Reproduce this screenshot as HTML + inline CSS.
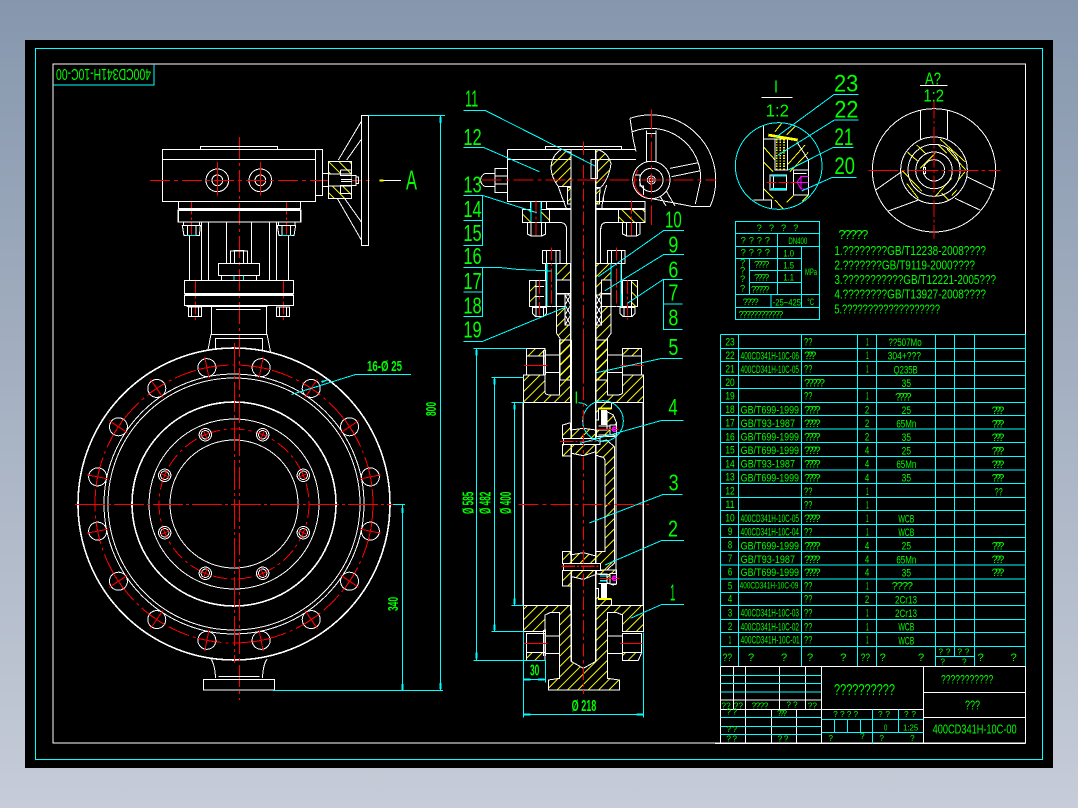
<!DOCTYPE html>
<html><head><meta charset="utf-8"><title>400CD341H-10C-00</title>
<style>
html,body{margin:0;padding:0;width:1078px;height:808px;overflow:hidden;background:#9aa8bc}
svg{display:block;position:absolute;left:0;top:0}
.w{stroke:#fff;fill:none}.wb{stroke:#fff;fill:#000}.c{stroke:#0ff;fill:none}.r{stroke:#f00;fill:none}.y{stroke:#ff0;fill:none}.m{stroke:#f0f;fill:none}
.h{stroke:#fff;fill:url(#h)}.b{stroke:#fff;fill:url(#b)}
text{fill:#0f0;font-family:"Liberation Sans",sans-serif;stroke:none}
.mid{text-anchor:middle}
.bd{font-weight:bold}
</style></head><body>
<svg width="1078" height="808" viewBox="0 0 1078 808" xmlns="http://www.w3.org/2000/svg" shape-rendering="crispEdges">
<defs>
<linearGradient id="bg" x1="0" y1="0" x2="0" y2="1"><stop offset="0" stop-color="#8697ad"/><stop offset="1" stop-color="#c6ccd8"/></linearGradient>
<pattern id="h" width="22" height="22" patternUnits="userSpaceOnUse" patternTransform="rotate(45)"><line x1="1" y1="0" x2="1" y2="22" stroke="#ff0" stroke-width="2.4"/></pattern>
<pattern id="b" width="22" height="22" patternUnits="userSpaceOnUse" patternTransform="rotate(-45)"><line x1="1" y1="0" x2="1" y2="22" stroke="#ff0" stroke-width="2.4"/></pattern>
<g id="bh"><circle cx="234" cy="365" r="9" class="w"/><path class="r" d="M234 354V376M225 365H243"/></g>
<g id="sh"><circle cx="234" cy="429" r="6.2" class="w"/><circle cx="234" cy="429" r="4.2" class="w"/><path class="r" d="M234 424V434M229 429H239"/></g>
<clipPath id="ci"><circle cx="161" cy="303" r="130"/></clipPath>
</defs>
<rect width="1078" height="808" fill="url(#bg)"/>
<rect x="25" y="40" width="1028" height="728" fill="#000"/>
<rect x="35.5" y="48.5" width="1007" height="711" class="c"/>
<rect x="53" y="64" width="972.5" height="679" class="w"/>
<path class="c" d="M53 85H154V64"/>
<text transform="rotate(180 103.5 75)" x="56" y="81" font-size="16" textLength="95" lengthAdjust="spacingAndGlyphs">400CD341H-10C-00</text>

<!-- main circular view -->
<g stroke-width="1">
<circle cx="234" cy="504" r="156" class="w" stroke-width="1.6"/>
<circle cx="234" cy="504" r="130" class="w"/><circle cx="234" cy="504" r="126" class="w"/>
<circle cx="234" cy="504" r="102" class="w" stroke-width="1.6"/>
<circle cx="234" cy="504" r="85" class="w"/><circle cx="234" cy="504" r="64" class="w"/>
<circle cx="234" cy="504" r="139" class="r" stroke-dasharray="22 4 3 4"/>
<circle cx="234" cy="504" r="75" class="r" stroke-dasharray="14 4 3 4"/>
<use href="#bh" transform="rotate(11.25 234 504)"/><use href="#bh" transform="rotate(33.75 234 504)"/><use href="#bh" transform="rotate(56.25 234 504)"/><use href="#bh" transform="rotate(78.75 234 504)"/>
<use href="#bh" transform="rotate(101.25 234 504)"/><use href="#bh" transform="rotate(123.75 234 504)"/><use href="#bh" transform="rotate(146.25 234 504)"/><use href="#bh" transform="rotate(168.75 234 504)"/>
<use href="#bh" transform="rotate(191.25 234 504)"/><use href="#bh" transform="rotate(213.75 234 504)"/><use href="#bh" transform="rotate(236.25 234 504)"/><use href="#bh" transform="rotate(258.75 234 504)"/>
<use href="#bh" transform="rotate(281.25 234 504)"/><use href="#bh" transform="rotate(303.75 234 504)"/><use href="#bh" transform="rotate(326.25 234 504)"/><use href="#bh" transform="rotate(348.75 234 504)"/>
<use href="#sh" transform="rotate(22.5 234 504)"/><use href="#sh" transform="rotate(67.5 234 504)"/><use href="#sh" transform="rotate(112.5 234 504)"/><use href="#sh" transform="rotate(157.5 234 504)"/>
<use href="#sh" transform="rotate(202.5 234 504)"/><use href="#sh" transform="rotate(247.5 234 504)"/><use href="#sh" transform="rotate(292.5 234 504)"/><use href="#sh" transform="rotate(337.5 234 504)"/>
<path class="r" d="M75 504.5H393" stroke-dasharray="30 3 3 3"/>
<path class="r" d="M234.5 343V663" stroke-dasharray="30 3 3 3"/>
<path class="r" d="M239.5 137V700" stroke-dasharray="22 4 3 4"/>
<!-- neck top -->
<path class="w" d="M211.5 306V334M266.5 306V334M211 334.5H267M211 334L208 350M267 334L270.5 352M215.5 350V338.5H262.5V350"/>
<!-- foot -->
<path class="w" d="M211 659Q215 665 215.5 678M267 659Q263 665 262.5 678M218.5 676.5H259.5"/>
<rect x="203.5" y="679.5" width="71" height="10.5" class="w" stroke-width="1.4"/>
<!-- dims -->
<path class="c" d="M273 690.5H443M440.5 115.5V690M393 504.5H405M402.5 504.5V690M369 115.5H445M411 374.5H355.5L291.5 394.5"/>
<path d="M401.5 508h2v5h-2zM401.5 684h2v6h-2zM439.5 683h2v6h-2zM439.5 117h2v6h-2zM330 379l-8 4-1-2z" fill="#0ff"/>
<text class="bd" transform="translate(436 416) rotate(-90)" font-size="15" textLength="14" lengthAdjust="spacingAndGlyphs">800</text>
<text class="bd" transform="translate(398 611) rotate(-90)" font-size="15" textLength="14" lengthAdjust="spacingAndGlyphs">340</text>
<text class="bd" x="367" y="371" font-size="15" textLength="35" lengthAdjust="spacingAndGlyphs">16-Ø 25</text>
</g>

<!-- gear operator, zoom-1 coords -->
<g transform="translate(40 50) scale(.33333)" stroke-width="3">
<rect x="367" y="298" width="459" height="156" class="w"/><path class="w" d="M367 328H826M482 298V290H713V298M826 298H848V437H826"/>
<circle cx="532" cy="391" r="34" class="w"/><circle cx="532" cy="391" r="16" class="w"/>
<circle cx="661" cy="391" r="34" class="w"/><circle cx="661" cy="391" r="16" class="w"/>
<path class="r" d="M532 336V436M661 336V436"/>
<path class="r" d="M330 391H995" stroke-dasharray="60 12 12 12"/>
<path class="r" d="M454 454V565M740 454V565M466 690V810M730 690V810" stroke-dasharray="40 8 8 8"/>
<rect x="415" y="454" width="367" height="21" class="w"/><rect x="415" y="481" width="367" height="35" class="w" stroke-width="4"/><path class="w" d="M415 477.5H782" stroke-width="5"/>
<path class="w" d="M430 518V527H478V518M715 518V527H765V518"/>
<path class="w" d="M427 527H481L478 557H432ZM442 527V557H468V527M712 527H767L762 557H717ZM726 527V557H752V527"/>
<path class="c" d="M440 556h30M725 556h30"/>
<path class="w" d="M448 557V690M484 518V690M506 518V690M559 518V640M634 518V640M688 518V690M709 518V690M746 557V690"/>
<rect x="535" y="640" width="124" height="37" class="w"/><rect x="571" y="603" width="52" height="37" class="w"/><path class="w" d="M583 603V640M611 603V640M580 601H614M544 677V690M649 677V690"/>
<path class="c" d="M582 677V690M611 677V690"/>
<rect x="433" y="692" width="328" height="38" class="w"/><rect x="433" y="736" width="328" height="30" class="w"/><path class="w" d="M433 733H761" stroke-width="4"/>
<path class="w" d="M445 771H485V800H445ZM455 771V800M475 771V800M709 771H749V800H709ZM719 771V800M739 771V800M440 769H682"/>
<path class="w" d="M528 778H662"/>
<rect x="865" y="334" width="70" height="112" class="h" style="fill:url(#b)"/>
<rect x="865" y="372" width="70" height="36" fill="#000"/>
<path class="w" d="M865 372H935M865 408H935M848 370V410H865V370ZM901 360V376H948V407H901V430M901 360H935M901 430H935M948 381H956V400H948M903 388H935M903 395H935"/>
<rect x="964" y="196" width="22" height="391" class="w"/>
<path class="w" d="M895 330L964 214M920 330L964 268M893 447L964 570M915 447L964 516"/>
<path d="M1018 389H1030V394H1018Z" fill="#ff0"/><path class="w" d="M1030 391.5H1083"/>
<path class="c" d="M986 197H1200"/>
<text x="1098" y="418" font-size="84" textLength="33" lengthAdjust="spacingAndGlyphs">A</text>
</g>

<!-- section upper, zoom-3 coords -->
<g transform="translate(450 80) scale(.33333)" stroke-width="3">
<!-- gear wheel -->
<path class="w" d="M540 115A195 195 0 0 1 780 380H730L600 355M540 115L550 180L558 215M555 285L580 345"/>
<path class="w" d="M548 155A150 150 0 0 1 752 300L736 372M590 152V245M618 152V245M590 160H618M660 265L745 248M665 290L752 272M650 335L675 378M628 345L648 378"/>
<circle cx="604" cy="300" r="56" class="wb"/><circle cx="604" cy="300" r="35" class="w"/><circle cx="604" cy="300" r="12" class="w"/><circle cx="604" cy="300" r="6" class="w"/>
<path class="r" d="M565 270A52 52 0 0 0 590 352"/>
<path class="w" d="M555 285H570V318H580V345"/>
<!-- case -->
<path class="w" d="M172 208H555M286 208V200H515V208M172 208V365H345M172 238H363M438 238H558M438 365H585V385H438M290 365V385H363M242 365V385M274 365V385M460 352V365"/>
<path class="w" d="M92 300A18 20 0 0 1 110 280H135V320H110A18 20 0 0 1 92 300ZM135 265H172V338H135ZM135 288H172M135 312H172"/>
<!-- bulges -->
<path class="h" d="M335 208L363 218V320H325Q303 290 303 262Q305 225 335 208Z"/>
<path class="h" d="M437 208Q470 212 483 250Q478 292 455 320L438 328Z"/>
<path class="w" d="M325 320Q335 350 350 388M470 315Q458 350 455 388"/>
<path class="h" d="M352 322H363V372H352ZM437 322H450L448 372H437Z"/>
<path class="wb" d="M423 238H443V295H423Z"/>
<!-- flanges -->
<path class="h" d="M218 388H298V428H218Z" style="fill:url(#b)"/>
<path class="h" d="M505 388H585V428H505Z" style="fill:url(#b)"/>
<path class="wb" d="M243 365H273V428H243Z"/><path class="c" d="M243 365V428M273 365V428"/>
<path class="w" d="M298 388H363M438 388H505M298 428H335Q350 430 350 450V550M505 428H465Q452 430 452 450V550"/>
<path class="w" d="M232 428H287V462L275 468H243L232 462ZM243 428V468M275 428V468M518 428H570V462L560 468H530L518 462ZM530 428V468M560 428V468"/>
<!-- body column -->
<path class="h" d="M320 550H362V900H330V775L320 760ZM438 550H483V760L472 775V900H438Z"/>
<path class="wb" d="M345 645H362V735H345ZM438 645H455V735H438Z"/>
<path class="w" d="M345 645L362 675M362 645L345 675M345 675L362 705M362 675L345 705M345 705L362 735M362 705L345 735M438 645L455 675M455 645L438 675M438 675L455 705M455 675L438 705M438 705L455 735M455 705L438 735"/>
<!-- bolts -->
<path class="wb" d="M277 512H330V550H277ZM289 512V550M318 512V550"/>
<path class="wb" d="M287 550H320V680H287Z"/><path class="c" d="M290 550V680M318 550V680" stroke-width="4"/>
<path class="wb" d="M320 600H362V640H320ZM320 642H345V680H320Z"/>
<path class="wb" d="M472 512H525V550H472ZM484 512V550M514 512V550"/>
<path class="wb" d="M483 550H515V680H483Z"/><path class="c" d="M483 550V680M513 550V680" stroke-width="4"/>
<path class="wb" d="M455 600H483V640H455ZM455 642H483V680H455Z"/>
<path class="h" d="M238 602H258V680H238Z"/><path class="wb" d="M258 602H288V680H258ZM247 682H290V700L280 710H257L247 700Z"/><path class="w" d="M258 682V710M280 682V710M255 620H282M255 650H282"/>
<path class="h" d="M542 602H562V680H542Z" style="fill:url(#b)"/><path class="wb" d="M518 602H545V680H518ZM510 682H555V700L545 710H520L510 700Z"/><path class="w" d="M522 682V710M545 682V710"/>
<path class="c" d="M515 640V680"/>
<!-- stem -->
<path class="w" d="M363 208V900M437 208V900" stroke-width="4"/>
<!-- red -->
<path class="r" d="M95 300H800" stroke-dasharray="60 12 12 12"/>
<path class="r" d="M604 88V435" stroke-dasharray="60 12 12 12"/>
<path class="r" d="M400 185V900" stroke-dasharray="40 10 10 10"/>
<path class="r" d="M258 362V470M544 362V470M304 502V680M500 502V680M268 602V712M532 602V718" stroke-dasharray="40 8 8 8"/>
<!-- leaders -->
<path class="c" d="M40 91H105L435 258M40 202H100L268 275M40 347H100L260 398M40 347H97V497H40M40 422H97M40 562H145L200 568L305 573M40 562H97V710H40M40 636H97M40 784H98L350 680"/>
<path class="c" d="M702 451H642L445 590M702 523H642L465 632M698 598H640L532 670M640 598V748H698M640 672H698M698 835H636L440 878"/>
<g font-size="70">
<text x="45" y="80" textLength="40" lengthAdjust="spacingAndGlyphs">11</text>
<text x="40" y="195" textLength="55" lengthAdjust="spacingAndGlyphs">12</text>
<text x="40" y="338" textLength="55" lengthAdjust="spacingAndGlyphs">13</text>
<text x="40" y="411" textLength="55" lengthAdjust="spacingAndGlyphs">14</text>
<text x="40" y="483" textLength="55" lengthAdjust="spacingAndGlyphs">15</text>
<text x="40" y="552" textLength="55" lengthAdjust="spacingAndGlyphs">16</text>
<text x="40" y="627" textLength="55" lengthAdjust="spacingAndGlyphs">17</text>
<text x="40" y="700" textLength="55" lengthAdjust="spacingAndGlyphs">18</text>
<text x="40" y="772" textLength="55" lengthAdjust="spacingAndGlyphs">19</text>
<text x="645" y="443" textLength="50" lengthAdjust="spacingAndGlyphs">10</text>
<text x="655" y="517" textLength="30" lengthAdjust="spacingAndGlyphs">9</text>
<text x="655" y="592" textLength="30" lengthAdjust="spacingAndGlyphs">6</text>
<text x="655" y="662" textLength="30" lengthAdjust="spacingAndGlyphs">7</text>
<text x="655" y="737" textLength="30" lengthAdjust="spacingAndGlyphs">8</text>
<text x="655" y="825" textLength="30" lengthAdjust="spacingAndGlyphs">5</text>
</g>
</g>

<!-- section lower, zoom-4 coords -->
<g transform="translate(450 340) scale(.33333)" stroke-width="3">
<path class="h" d="M220 105H285V158Q288 165 300 165H328V0H362V187H220Z"/>
<path class="h" d="M580 105H518V158Q515 165 500 165H472V0H438V187H580Z"/>
<rect x="229" y="25" width="56" height="23" class="h"/><rect x="518" y="25" width="57" height="23" class="h"/>
<rect x="229" y="48" width="56" height="57" class="w"/><rect x="518" y="48" width="57" height="57" class="w"/>
<path class="w" d="M280 30V105M286 30V105M285 45H328M285 97H328M472 45H518M472 97H518M518 30V105"/>
<path class="h" d="M220 797H362L365 965L400 985L436 965L438 797H580V875H518V825L500 818H472V1015L508 1020V1050H296V1020L328 1015V818H300L285 825V875H220Z"/>
<path class="h" d="M229 938H285V961H229ZM518 938H575L565 961H518Z"/>
<rect x="229" y="880" width="56" height="58" class="w"/><rect x="518" y="880" width="57" height="58" class="w"/>
<path class="w" d="M280 870V948M286 868V948M285 888H328M285 940H328M472 888H518M472 940H518"/>
<path class="w" d="M220 187V797M580 187V797" stroke-width="5"/>
<path class="w" d="M220 187H362M438 187H580M220 797H362M438 797H580"/>
<path class="w" d="M364 0V965M437 0V965" stroke-width="4"/>
<!-- right disc -->
<path class="h" d="M438 313L450 305L470 300L493 320V670L470 690L438 692V635H465V365Q465 350 450 350L438 345Z"/>
<path class="w" d="M498 285V700M493 285H500"/>
<!-- upper seat -->
<path class="h" d="M438 187H485V205H445V240H438Z"/>
<path class="h" d="M471 215L490 225L500 250V290H440V270H471Z"/>
<rect x="453" y="210" width="18" height="45" fill="#fff"/>
<path class="y" d="M445 205H485" stroke-width="6"/>
<rect x="480" y="255" width="20" height="30" class="wb"/>
<path class="w" d="M445 258H480M445 285H480"/>
<path class="r" d="M440 268H505"/>
<path class="m" d="M500 262H490Q484 268 490 274H500M486 268H498" stroke-width="4"/>
<!-- lower seat -->
<path class="h" d="M438 797H485V778H445V745H438Z"/>
<path class="h" d="M471 728L490 735L500 732V690H440V702H471Z"/>
<rect x="453" y="730" width="18" height="45" fill="#fff"/>
<path class="y" d="M445 777H485" stroke-width="6"/>
<rect x="480" y="700" width="20" height="32" class="wb"/>
<path class="w" d="M445 704H480M445 730H480"/>
<path class="r" d="M450 715H508"/>
<path class="m" d="M500 709H490Q484 715 490 721H500M486 715H498" stroke-width="4"/>
<path class="c" d="M450 708H470M450 722H470" stroke-width="4"/>
<!-- left bosses -->
<path class="h" d="M338 255L362 248V270L400 265L438 270V295H338Z"/>
<path class="h" d="M338 313H438V335L400 347L365 340V348H338Z"/>
<path class="h" d="M338 635H362V645L400 638L438 648V670H338Z"/>
<path class="h" d="M338 692H438V703L400 718L365 710V738H338Z"/>
<rect x="340" y="295" width="110" height="18" class="wb"/>
<rect x="340" y="670" width="112" height="22" class="wb"/>
<path class="r" d="M330 304H450" stroke-dasharray="40 6 6 6"/>
<path class="r" d="M335 679H450" stroke-width="5" stroke-dasharray="40 6 6 6"/>
<path class="c" d="M385 188Q400 188 411 197"/>
<circle cx="459" cy="243" r="61" class="c"/>
<text x="373" y="190" font-size="52" textLength="12" lengthAdjust="spacingAndGlyphs">I</text>
<!-- red -->
<path class="r" d="M205 493H597" stroke-dasharray="60 12 12 12"/>
<path class="r" d="M400 0V1062" stroke-dasharray="40 10 10 10"/>
<path class="r" d="M222 76H292M510 76H582M222 910H292M510 910H582"/>
<!-- dims -->
<path class="c" d="M80 25V961M70 25H229M70 961H285M133 112V875M125 112H220M125 874H220M193 187V797M185 187H220M185 796H220M220 875V1133M286 960V1028M220 1018H286M580 878V1133M220 1123H580"/>
<path fill="#0ff" d="M77 30h6v17h-6zM77 938h6v17h-6zM130 117h6v16h-6zM130 853h6v17h-6zM190 195h6v14h-6zM190 776h6v16h-6zM220 1015h22v6h-22zM264 1015h20v6h-20zM222 1120h20v6h-20zM560 1120h20v6h-20z"/>
<path class="c" d="M700 241H636L390 310M698 463H640L418 549M702 601H636L465 675M702 793H636L541 835M698 55H636L440 98"/>
<g font-size="48" class="bd">
<text transform="translate(70 522) rotate(-90)" textLength="67" lengthAdjust="spacingAndGlyphs">Ø 585</text>
<text transform="translate(122 522) rotate(-90)" textLength="67" lengthAdjust="spacingAndGlyphs">Ø 482</text>
<text transform="translate(183 522) rotate(-90)" textLength="67" lengthAdjust="spacingAndGlyphs">Ø 400</text>
<text x="240" y="1007" textLength="28" lengthAdjust="spacingAndGlyphs">30</text>
<text x="365" y="1113" textLength="74" lengthAdjust="spacingAndGlyphs">Ø 218</text>
</g>
<g font-size="70">
<text x="655" y="225" textLength="28" lengthAdjust="spacingAndGlyphs">4</text>
<text x="656" y="452" textLength="30" lengthAdjust="spacingAndGlyphs">3</text>
<text x="654" y="590" textLength="30" lengthAdjust="spacingAndGlyphs">2</text>
<text x="660" y="782" textLength="16" lengthAdjust="spacingAndGlyphs">1</text>
</g>
</g>

<!-- details, zoom-5 coords -->
<g transform="translate(725 65) scale(.33333)" stroke-width="3">
<g clip-path="url(#ci)">
<path class="y" d="M150 200L170 175M185 210L215 180M115 245L150 285M115 290L145 320M187 300L240 240M195 320L250 262M115 370L145 400M150 405L175 432M185 412L205 392M232 408L248 392"/>
<path class="wb" d="M150 222H187V315H150Z"/>
<path stroke="#ff0" stroke-width="5" stroke-dasharray="4 4" fill="none" d="M155 222V315M166 222V315M177 222V315"/>
<path stroke="#ff0" stroke-width="8" fill="none" d="M130 210L218 225"/>
<path class="w" d="M115 170V222M115 222H150M115 222V405M205 315H250V390H205ZM205 325H245M250 285V315M215 230L250 285M135 330H185V375H135ZM145 330V375M85 405H140V433M140 405V433"/>
<path class="c" d="M138 332H185M138 372H185" stroke-width="5"/>
<path class="r" d="M125 352H240" stroke-dasharray="30 6"/>
<path class="m" d="M250 334H228L216 352L228 372H250M228 334V372M216 352H250" stroke-width="3"/>
<path class="r" d="M32 285V320"/>
</g>
<circle cx="161" cy="303" r="130" class="c"/>
<path class="w" d="M110 97H203M585 61H668"/>
<path class="c" d="M400 88H328L155 215M400 165H328L160 270M385 247H325L190 315M395 337H322L230 378"/>
<g font-size="72">
<text x="327" y="80" textLength="73" lengthAdjust="spacingAndGlyphs">23</text>
<text x="328" y="158" textLength="72" lengthAdjust="spacingAndGlyphs">22</text>
<text x="328" y="240" textLength="57" lengthAdjust="spacingAndGlyphs">21</text>
<text x="328" y="327" textLength="62" lengthAdjust="spacingAndGlyphs">20</text>
</g>
<g font-size="52">
<text x="147" y="82" textLength="12" lengthAdjust="spacingAndGlyphs">I</text>
<text x="122" y="155" textLength="70" lengthAdjust="spacingAndGlyphs">1:2</text>
<text x="600" y="58" textLength="48" lengthAdjust="spacingAndGlyphs">A?</text>
<text x="595" y="110" textLength="62" lengthAdjust="spacingAndGlyphs">1:2</text>
</g>
<!-- A view -->
<circle cx="627" cy="316" r="185" class="w"/>
<path class="w" d="M587 137V220Q585 222 588 225M667 137V222"/>
<path class="y" d="M575 240L605 268M548 262L580 290M530 315L590 378M545 355L580 400M645 222L720 290M665 250L722 315M630 265L585 310M680 340L630 395M650 385L670 405M695 375L680 392M640 240L665 265M720 320L700 345"/>
<circle cx="627" cy="316" r="100" class="w"/><circle cx="627" cy="316" r="78" class="w"/><circle cx="627" cy="316" r="55" class="w"/><circle cx="627" cy="316" r="32" class="w"/>
<path class="w" d="M452 375L530 320M490 438L580 405M765 435L690 400M808 375L725 335M595 308H602V325H595Z"/>
<path class="r" d="M430 316H827" stroke-dasharray="90 10 10 10"/>
<path class="r" d="M627 110V520" stroke-dasharray="50 8 8 8"/>
<!-- params table -->
<rect x="32" y="470" width="251" height="293" class="c"/>
<path class="c" d="M32 506H283M32 545H283M32 580H230M73 616H230M73 652H230M32 688H283M32 727H283M158 506V688M73 580V688M230 545V727M138 688V727"/>
<g font-size="28">
<text x="95" y="498" textLength="125" lengthAdjust="spacing">? ? ? ?</text>
<text x="47" y="535" textLength="88" lengthAdjust="spacing">? ? ? ?</text>
<text x="190" y="537" textLength="57" lengthAdjust="spacingAndGlyphs">DN400</text>
<text x="47" y="572" textLength="88" lengthAdjust="spacing">? ? ? ?</text>
<text x="175" y="575" textLength="32" lengthAdjust="spacingAndGlyphs">1.0</text>
<text x="45" y="601">?</text><text x="45" y="625">?</text><text x="45" y="651">?</text><text x="45" y="679">?</text>
<text x="87" y="608" textLength="46" lengthAdjust="spacing">????</text>
<text x="175" y="611" textLength="32" lengthAdjust="spacingAndGlyphs">1.5</text>
<text x="87" y="646" textLength="46" lengthAdjust="spacing">????</text>
<text x="175" y="646" textLength="32" lengthAdjust="spacingAndGlyphs">1.1</text>
<text x="78" y="682" textLength="56" lengthAdjust="spacing">?????</text>
<text x="240" y="630" textLength="36" lengthAdjust="spacingAndGlyphs">MPa</text>
<text x="53" y="720" textLength="48" lengthAdjust="spacing">????</text>
<text x="143" y="722" textLength="85" lengthAdjust="spacingAndGlyphs">-25~425</text>
<text x="247" y="720" textLength="20" lengthAdjust="spacingAndGlyphs">°C</text>
<text x="40" y="757" textLength="135" lengthAdjust="spacing">????????????</text>
</g>
<g font-size="38">
<text x="340" y="522" textLength="90" lengthAdjust="spacing">?????</text>
<text x="328" y="570" textLength="455" lengthAdjust="spacingAndGlyphs">1.????????GB/T12238-2008????</text>
<text x="328" y="613" textLength="422" lengthAdjust="spacingAndGlyphs">2.???????GB/T9119-2000????</text>
<text x="328" y="657" textLength="485" lengthAdjust="spacingAndGlyphs">3.???????????GB/T12221-2005???</text>
<text x="328" y="700" textLength="455" lengthAdjust="spacingAndGlyphs">4.????????GB/T13927-2008????</text>
<text x="328" y="745" textLength="317" lengthAdjust="spacingAndGlyphs">5.???????????????????</text>
</g>
</g>

<!-- parts table, zoom-6 coords -->
<g transform="translate(715 330) scale(.33333)" stroke-width="3">
<path class="c" d="M17 14H931M17 55H931M17 95H931M17 136H931M17 176H931M17 217H931M17 257H931M17 297H931M17 338H931M17 380H931M17 420H931M17 460H931M17 502H931M17 542H931M17 583H931M17 622H931M17 665H931M17 705H931M17 747H931M17 787H931M17 827H931M17 868H931M17 908H931M17 949H931"/>
<path class="c" d="M17 14V1009M71 14V1009M260 14V1009M428 14V1009M485 14V1009M661 14V949M718 14V979M779 14V1009M931 14V1009M661 949V1009M661 979H779"/>
<g font-size="33">
<text class="mid" x="45" y="46" textLength="28" lengthAdjust="spacingAndGlyphs">23</text><text x="267" y="46" textLength="25" lengthAdjust="spacingAndGlyphs">??</text><text class="mid" x="457" y="46" textLength="8" lengthAdjust="spacingAndGlyphs">1</text><text class="mid" x="570" y="48" textLength="100" lengthAdjust="spacingAndGlyphs">??507Mo</text>
<text class="mid" x="45" y="87" textLength="28" lengthAdjust="spacingAndGlyphs">22</text><text x="77" y="89" textLength="175" lengthAdjust="spacingAndGlyphs">400CD341H-10C-06</text><text x="267" y="87" textLength="37" lengthAdjust="spacing">???</text><text class="mid" x="457" y="87" textLength="8" lengthAdjust="spacingAndGlyphs">1</text><text class="mid" x="568" y="89" textLength="100" lengthAdjust="spacingAndGlyphs">304+???</text>
<text class="mid" x="45" y="127" textLength="28" lengthAdjust="spacingAndGlyphs">21</text><text x="77" y="129" textLength="175" lengthAdjust="spacingAndGlyphs">400CD341H-10C-05</text><text x="267" y="127" textLength="25" lengthAdjust="spacingAndGlyphs">??</text><text class="mid" x="457" y="127" textLength="8" lengthAdjust="spacingAndGlyphs">1</text><text class="mid" x="572" y="130" textLength="72" lengthAdjust="spacingAndGlyphs">Q235B</text>
<text class="mid" x="45" y="168" textLength="28" lengthAdjust="spacingAndGlyphs">20</text><text x="267" y="170" textLength="63" lengthAdjust="spacing">?????</text><text class="mid" x="574" y="171" textLength="28" lengthAdjust="spacingAndGlyphs">35</text>
<text class="mid" x="45" y="209" textLength="28" lengthAdjust="spacingAndGlyphs">19</text><text x="267" y="209" textLength="25" lengthAdjust="spacingAndGlyphs">??</text><text class="mid" x="457" y="209" textLength="8" lengthAdjust="spacingAndGlyphs">1</text><text class="mid" x="565" y="211" textLength="50" lengthAdjust="spacing">????</text>
<text class="mid" x="45" y="249" textLength="28" lengthAdjust="spacingAndGlyphs">18</text><text x="77" y="250" textLength="175" lengthAdjust="spacingAndGlyphs">GB/T699-1999</text><text x="267" y="250" textLength="50" lengthAdjust="spacing">????</text><text class="mid" x="456" y="250" textLength="13" lengthAdjust="spacingAndGlyphs">2</text><text class="mid" x="574" y="252" textLength="28" lengthAdjust="spacingAndGlyphs">25</text><text class="mid" x="849" y="252" textLength="38" lengthAdjust="spacing">???</text>
<text class="mid" x="45" y="290" textLength="28" lengthAdjust="spacingAndGlyphs">17</text><text x="77" y="291" textLength="163" lengthAdjust="spacingAndGlyphs">GB/T93-1987</text><text x="267" y="291" textLength="50" lengthAdjust="spacing">????</text><text class="mid" x="456" y="291" textLength="13" lengthAdjust="spacingAndGlyphs">2</text><text class="mid" x="574" y="293" textLength="60" lengthAdjust="spacingAndGlyphs">65Mn</text><text class="mid" x="849" y="293" textLength="38" lengthAdjust="spacing">???</text>
<text class="mid" x="45" y="331" textLength="28" lengthAdjust="spacingAndGlyphs">16</text><text x="77" y="332" textLength="175" lengthAdjust="spacingAndGlyphs">GB/T699-1999</text><text x="267" y="332" textLength="50" lengthAdjust="spacing">????</text><text class="mid" x="456" y="332" textLength="13" lengthAdjust="spacingAndGlyphs">2</text><text class="mid" x="574" y="333" textLength="28" lengthAdjust="spacingAndGlyphs">35</text><text class="mid" x="849" y="333" textLength="38" lengthAdjust="spacing">???</text>
<text class="mid" x="45" y="371" textLength="28" lengthAdjust="spacingAndGlyphs">15</text><text x="77" y="372" textLength="175" lengthAdjust="spacingAndGlyphs">GB/T699-1999</text><text x="267" y="372" textLength="50" lengthAdjust="spacing">????</text><text class="mid" x="456" y="372" textLength="13" lengthAdjust="spacingAndGlyphs">4</text><text class="mid" x="574" y="373" textLength="28" lengthAdjust="spacingAndGlyphs">25</text><text class="mid" x="849" y="373" textLength="38" lengthAdjust="spacing">???</text>
<text class="mid" x="45" y="412" textLength="28" lengthAdjust="spacingAndGlyphs">14</text><text x="77" y="413" textLength="163" lengthAdjust="spacingAndGlyphs">GB/T93-1987</text><text x="267" y="413" textLength="50" lengthAdjust="spacing">????</text><text class="mid" x="456" y="413" textLength="13" lengthAdjust="spacingAndGlyphs">4</text><text class="mid" x="574" y="414" textLength="60" lengthAdjust="spacingAndGlyphs">65Mn</text><text class="mid" x="849" y="414" textLength="38" lengthAdjust="spacing">???</text>
<text class="mid" x="45" y="452" textLength="28" lengthAdjust="spacingAndGlyphs">13</text><text x="77" y="454" textLength="175" lengthAdjust="spacingAndGlyphs">GB/T699-1999</text><text x="267" y="454" textLength="50" lengthAdjust="spacing">????</text><text class="mid" x="456" y="454" textLength="13" lengthAdjust="spacingAndGlyphs">4</text><text class="mid" x="574" y="455" textLength="28" lengthAdjust="spacingAndGlyphs">35</text><text class="mid" x="849" y="455" textLength="38" lengthAdjust="spacing">???</text>
<text class="mid" x="45" y="493" textLength="28" lengthAdjust="spacingAndGlyphs">12</text><text x="267" y="495" textLength="25" lengthAdjust="spacingAndGlyphs">??</text><text class="mid" x="457" y="495" textLength="8" lengthAdjust="spacingAndGlyphs">1</text><text class="mid" x="851" y="496" textLength="24" lengthAdjust="spacingAndGlyphs">??</text>
<text class="mid" x="45" y="534" textLength="28" lengthAdjust="spacingAndGlyphs">11</text><text x="267" y="535" textLength="25" lengthAdjust="spacingAndGlyphs">??</text><text class="mid" x="457" y="535" textLength="8" lengthAdjust="spacingAndGlyphs">1</text>
<text class="mid" x="45" y="574" textLength="28" lengthAdjust="spacingAndGlyphs">10</text><text x="77" y="576" textLength="175" lengthAdjust="spacingAndGlyphs">400CD341H-10C-05</text><text x="267" y="576" textLength="50" lengthAdjust="spacing">????</text><text class="mid" x="457" y="576" textLength="8" lengthAdjust="spacingAndGlyphs">1</text><text class="mid" x="574" y="578" textLength="48" lengthAdjust="spacingAndGlyphs">WCB</text>
<text class="mid" x="45" y="615" textLength="13" lengthAdjust="spacingAndGlyphs">9</text><text x="77" y="616" textLength="175" lengthAdjust="spacingAndGlyphs">400CD341H-10C-04</text><text x="267" y="616" textLength="25" lengthAdjust="spacingAndGlyphs">??</text><text class="mid" x="457" y="616" textLength="8" lengthAdjust="spacingAndGlyphs">1</text><text class="mid" x="574" y="618" textLength="48" lengthAdjust="spacingAndGlyphs">WCB</text>
<text class="mid" x="45" y="656" textLength="13" lengthAdjust="spacingAndGlyphs">8</text><text x="77" y="658" textLength="175" lengthAdjust="spacingAndGlyphs">GB/T699-1999</text><text x="267" y="658" textLength="50" lengthAdjust="spacing">????</text><text class="mid" x="456" y="658" textLength="13" lengthAdjust="spacingAndGlyphs">4</text><text class="mid" x="574" y="659" textLength="28" lengthAdjust="spacingAndGlyphs">25</text><text class="mid" x="849" y="658" textLength="38" lengthAdjust="spacing">???</text>
<text class="mid" x="45" y="696" textLength="13" lengthAdjust="spacingAndGlyphs">7</text><text x="77" y="699" textLength="163" lengthAdjust="spacingAndGlyphs">GB/T93-1987</text><text x="267" y="699" textLength="50" lengthAdjust="spacing">????</text><text class="mid" x="456" y="699" textLength="13" lengthAdjust="spacingAndGlyphs">4</text><text class="mid" x="574" y="700" textLength="60" lengthAdjust="spacingAndGlyphs">65Mn</text><text class="mid" x="849" y="699" textLength="38" lengthAdjust="spacing">???</text>
<text class="mid" x="45" y="737" textLength="13" lengthAdjust="spacingAndGlyphs">6</text><text x="77" y="738" textLength="175" lengthAdjust="spacingAndGlyphs">GB/T699-1999</text><text x="267" y="738" textLength="50" lengthAdjust="spacing">????</text><text class="mid" x="456" y="738" textLength="13" lengthAdjust="spacingAndGlyphs">4</text><text class="mid" x="574" y="739" textLength="28" lengthAdjust="spacingAndGlyphs">35</text><text class="mid" x="849" y="738" textLength="38" lengthAdjust="spacing">???</text>
<text class="mid" x="45" y="778" textLength="13" lengthAdjust="spacingAndGlyphs">5</text><text x="74" y="776" font-size="27" textLength="176" lengthAdjust="spacingAndGlyphs">400CD341H-10C-09</text><text x="267" y="778" textLength="25" lengthAdjust="spacingAndGlyphs">??</text><text class="mid" x="457" y="778" textLength="8" lengthAdjust="spacingAndGlyphs">1</text><text class="mid" x="562" y="779" textLength="64" lengthAdjust="spacing">????</text>
<text class="mid" x="45" y="818" textLength="13" lengthAdjust="spacingAndGlyphs">4</text><text x="267" y="818" textLength="25" lengthAdjust="spacingAndGlyphs">??</text><text class="mid" x="456" y="819" textLength="13" lengthAdjust="spacingAndGlyphs">2</text><text class="mid" x="573" y="820" textLength="66" lengthAdjust="spacingAndGlyphs">2Cr13</text>
<text class="mid" x="45" y="859" textLength="13" lengthAdjust="spacingAndGlyphs">3</text><text x="77" y="860" textLength="175" lengthAdjust="spacingAndGlyphs">400CD341H-10C-03</text><text x="267" y="860" textLength="25" lengthAdjust="spacingAndGlyphs">??</text><text class="mid" x="457" y="860" textLength="8" lengthAdjust="spacingAndGlyphs">1</text><text class="mid" x="573" y="861" textLength="66" lengthAdjust="spacingAndGlyphs">2Cr13</text>
<text class="mid" x="45" y="900" textLength="13" lengthAdjust="spacingAndGlyphs">2</text><text x="77" y="901" textLength="175" lengthAdjust="spacingAndGlyphs">400CD341H-10C-02</text><text x="267" y="901" textLength="25" lengthAdjust="spacingAndGlyphs">??</text><text class="mid" x="457" y="901" textLength="8" lengthAdjust="spacingAndGlyphs">1</text><text class="mid" x="574" y="902" textLength="48" lengthAdjust="spacingAndGlyphs">WCB</text>
<text class="mid" x="45" y="940" textLength="8" lengthAdjust="spacingAndGlyphs">1</text><text x="77" y="941" textLength="177" lengthAdjust="spacingAndGlyphs">400CD341H-10C-01</text><text x="267" y="941" textLength="25" lengthAdjust="spacingAndGlyphs">??</text><text class="mid" x="457" y="941" textLength="8" lengthAdjust="spacingAndGlyphs">1</text><text class="mid" x="574" y="943" textLength="48" lengthAdjust="spacingAndGlyphs">WCB</text>
</g>
</g>

<!-- title block, zoom-7 coords -->
<g transform="translate(715 530) scale(.33333)" stroke-width="3">
<path class="w" d="M0 640H931M17 409H931M17 409V640M320 409V640M625 409V640M931 409V640M17 510H320M17 538H625M625 487H931M625 563H931M55 409V538M91 409V538M193 409V538M271 409V538M91 538V640M170 538V640M245 538V640"/>
<path class="c" d="M17 436H320M17 460H320M17 486H320M17 562H320M17 589H320M17 613H320M320 568H625M320 607H625M472 538V640M550 538V607M358 568V607M397 568V607M437 568V607"/>
<g font-size="34">
<text class="mid" x="37" y="393" textLength="28" lengthAdjust="spacingAndGlyphs">??</text>
<text class="mid" x="108" y="393">?</text><text class="mid" x="207" y="393">?</text><text class="mid" x="285" y="393">?</text><text class="mid" x="385" y="393">?</text>
<text class="mid" x="451" y="393" textLength="28" lengthAdjust="spacingAndGlyphs">??</text>
<text class="mid" x="503" y="393">?</text><text class="mid" x="618" y="393">?</text>
<text class="mid" x="797" y="393">?</text><text class="mid" x="896" y="393">?</text>
</g>
<g font-size="25">
<text class="mid" x="688" y="373" textLength="36" lengthAdjust="spacing">? ?</text>
<text class="mid" x="745" y="373" textLength="36" lengthAdjust="spacing">? ?</text>
<text class="mid" x="683" y="403">?</text><text class="mid" x="748" y="403">?</text>
<text class="mid" x="33" y="535">??</text><text class="mid" x="70" y="535">??</text><text class="mid" x="135" y="535" textLength="50" lengthAdjust="spacing">????</text>
<text class="mid" x="231" y="532" textLength="34" lengthAdjust="spacing">? ?</text><text class="mid" x="292" y="535">??</text>
<text class="mid" x="50" y="554" textLength="32" lengthAdjust="spacing">? ?</text><text class="mid" x="201" y="558" textLength="30" lengthAdjust="spacing">???</text>
<text class="mid" x="50" y="606" textLength="32" lengthAdjust="spacing">? ?</text><text class="mid" x="50" y="635" textLength="32" lengthAdjust="spacing">? ?</text><text class="mid" x="204" y="635" textLength="32" lengthAdjust="spacing">? ?</text>
<text class="mid" x="392" y="561" textLength="75" lengthAdjust="spacing">? ? ? ?</text><text class="mid" x="507" y="561" textLength="36" lengthAdjust="spacing">? ?</text><text class="mid" x="585" y="561" textLength="36" lengthAdjust="spacing">? ?</text>
<text class="mid" x="512" y="602" textLength="10" lengthAdjust="spacingAndGlyphs">0</text><text class="mid" x="587" y="602" textLength="46" lengthAdjust="spacingAndGlyphs">1:25</text>
<text class="mid" x="347" y="633">?</text><text class="mid" x="442" y="627">?</text><text class="mid" x="500" y="633">?</text><text class="mid" x="592" y="633">?</text>
</g>
<text x="357" y="495" font-size="46" textLength="183" lengthAdjust="spacingAndGlyphs">??????????</text>
<text x="678" y="460" font-size="36" textLength="157" lengthAdjust="spacingAndGlyphs">???????????</text>
<text x="750" y="538" font-size="38" textLength="45" lengthAdjust="spacingAndGlyphs">???</text>
<text x="653" y="611" font-size="40" textLength="252" lengthAdjust="spacingAndGlyphs">400CD341H-10C-00</text>
</g>
</svg>
</body></html>
